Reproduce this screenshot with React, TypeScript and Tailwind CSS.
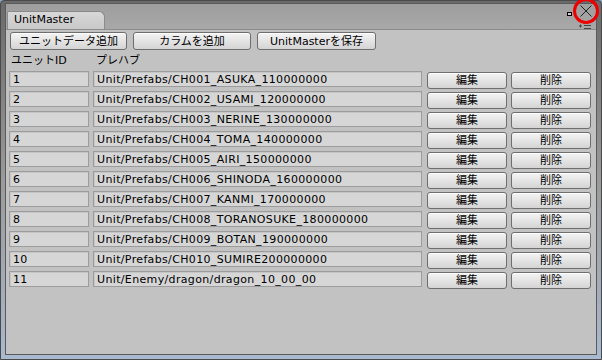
import React from "react";

const rows = [
  ["1", "Unit/Prefabs/CH001_ASUKA_110000000"],
  ["2", "Unit/Prefabs/CH002_USAMI_120000000"],
  ["3", "Unit/Prefabs/CH003_NERINE_130000000"],
  ["4", "Unit/Prefabs/CH004_TOMA_140000000"],
  ["5", "Unit/Prefabs/CH005_AIRI_150000000"],
  ["6", "Unit/Prefabs/CH006_SHINODA_160000000"],
  ["7", "Unit/Prefabs/CH007_KANMI_170000000"],
  ["8", "Unit/Prefabs/CH008_TORANOSUKE_180000000"],
  ["9", "Unit/Prefabs/CH009_BOTAN_190000000"],
  ["10", "Unit/Prefabs/CH010_SUMIRE200000000"],
  ["11", "Unit/Enemy/dragon/dragon_10_00_00"],
];

const font = { fontFamily: '"DejaVu Sans", "Noto Sans CJK JP", sans-serif' };

function Btn({ children, w, h = 17 }: { children: React.ReactNode; w: number; h?: number }) {
  return (
    <div
      className="flex items-center justify-center rounded-[3px] border border-[#6e6e6e] bg-gradient-to-b from-[#f4f4f4] to-[#d4d4d4] text-[11px] leading-none text-black shadow-[inset_0_1px_0_#ffffff]"
      style={{ width: w, height: h }}
    >
      {children}
    </div>
  );
}

function Field({ children, w }: { children: React.ReactNode; w: number }) {
  return (
    <div
      className="flex h-[16px] items-center whitespace-nowrap border border-[#9c9c9c] bg-[#d6d6d6] pl-[3px] text-[11px] leading-none tracking-[0.35px] text-black shadow-[inset_1px_1px_0_#c6c6c6]"
      style={{ width: w }}
    >
      {children}
    </div>
  );
}

export default function App() {
  return (
    <div
      className="relative h-[360px] w-[602px] overflow-hidden bg-[#8ea6c6]"
      style={font}
    >
      <div className="absolute inset-0 rounded-t-[4px] border border-[#4a4a4a] bg-gradient-to-b from-[#6a6a6a] via-[#9a9a9a] to-[#a9b9cf] p-0" />
      <div className="absolute left-0 top-0 flex h-[360px] w-[602px] flex-col pl-[5px] pr-[5px] pt-[3px] pb-[5px]">
        <div className="flex h-full w-full flex-col border border-[#5a5a5a] bg-[#c2c2c2]">
          {/* tab bar */}
          <div className="relative flex h-[26px] items-end bg-gradient-to-b from-[#9e9e9e] to-[#a8a8a8] pl-[1px] border-b border-[#8c8c8c]">
            <div className="flex h-[18px] w-[98px] items-center rounded-tr-[6px] rounded-tl-[2px] border border-b-0 border-[#8a8a8a] bg-gradient-to-b from-[#d8d8d8] to-[#c8c8c8] pl-[6px] text-[11px] text-black">
              UnitMaster
            </div>
            {/* small box icon */}
            <div className="absolute left-[561px] top-[8px] h-[4px] w-[5px] border border-black bg-[#d0d0d0]" />
            {/* close X */}
            <svg className="absolute left-[567px] top-[-6px]" width="26" height="26" viewBox="0 0 26 26">
              <path d="M7.5 7.5 L18.5 18.5 M18.5 7.5 L7.5 18.5" stroke="#222" strokeWidth="1" fill="none" />
              <circle cx="13" cy="13" r="11.5" stroke="#ee0000" strokeWidth="3" fill="none" />
            </svg>
            {/* menu lines */}
            <svg className="absolute left-[572px] top-[20px]" width="14" height="6" viewBox="0 0 14 6">
              <path d="M1 2 H4 M2.5 0.5 V3.5 M6 1.5 H13 M6 4.5 H13" stroke="#444" strokeWidth="1" fill="none" />
            </svg>
          </div>
          {/* toolbar */}
          <div className="flex gap-[6px] pl-[4px] pt-[2px]">
            <Btn w={117} h={18}>ユニットデータ追加</Btn>
            <Btn w={118} h={18}>カラムを追加</Btn>
            <Btn w={119} h={18}>UnitMasterを保存</Btn>
          </div>
          {/* header */}
          <div className="flex h-[21px] items-center pl-[5px] pt-[1px] text-[11px] text-black">
            <div className="w-[85px]">ユニットID</div>
            <div>プレハブ</div>
          </div>
          {/* rows */}
          <div className="flex flex-col pl-[3px]">
            {rows.map(([id, path]) => (
              <div key={id} className="flex h-[20px] items-start">
                <Field w={80}>{id}</Field>
                <div className="w-[4px]" />
                <Field w={329}>{path}</Field>
                <div className="w-[5px]" />
                <div className="mt-[1px]">
                  <Btn w={80}>編集</Btn>
                </div>
                <div className="w-[4px]" />
                <div className="mt-[1px]">
                  <Btn w={80}>削除</Btn>
                </div>
              </div>
            ))}
          </div>
        </div>
      </div>
    </div>
  );
}
